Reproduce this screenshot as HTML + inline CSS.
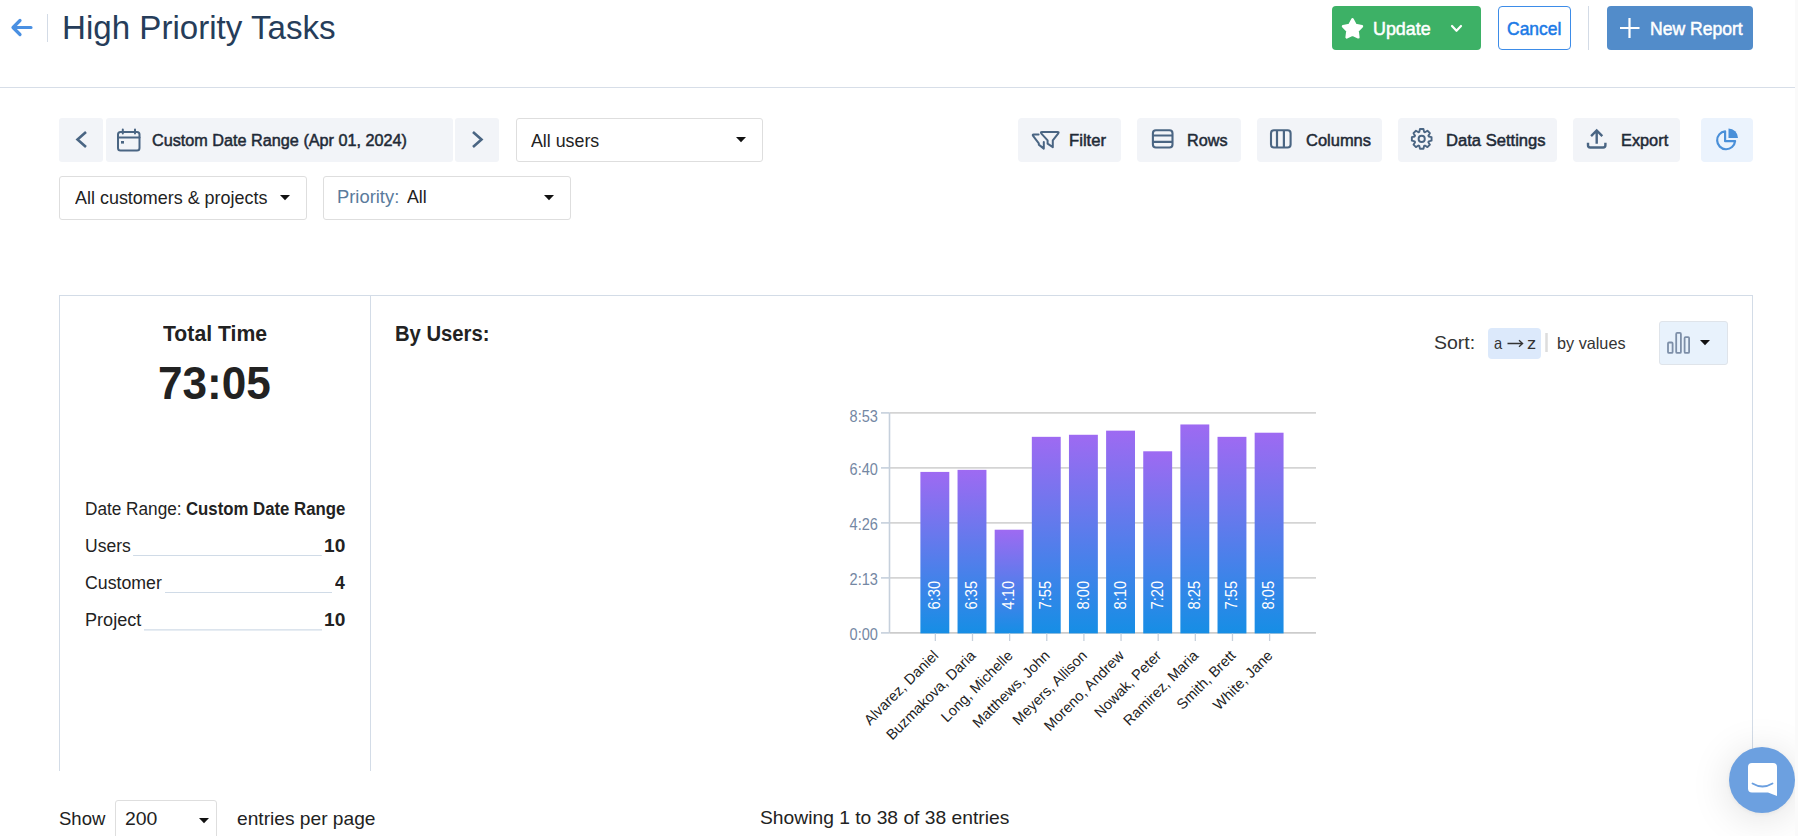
<!DOCTYPE html>
<html><head><meta charset="utf-8"><style>
html,body{margin:0;padding:0;background:#fff;}
#root{position:relative;width:1798px;height:836px;overflow:hidden;background:#fff;font-family:"Liberation Sans", sans-serif;}
.t{position:absolute;white-space:pre;line-height:1;transform-origin:0 0;font-family:"Liberation Sans", sans-serif;}
.b{position:absolute;box-sizing:border-box;}
svg{position:absolute;left:0;top:0;}
svg text{font-family:"Liberation Sans", sans-serif;}
</style></head><body><div id="root">
<div class="b" style="left:0;top:87px;width:1795px;height:1px;background:#d7dee8"></div>
<div class="b" style="left:1332px;top:6px;width:149px;height:44px;background:#3db166;border-radius:4px"></div>
<div class="b" style="left:1498px;top:6px;width:73px;height:44px;border:1.2px solid #3d8ce8;border-radius:4px"></div>
<div class="b" style="left:1607px;top:6px;width:146px;height:44px;background:#528cca;border-radius:4px"></div>
<div class="b" style="left:59px;top:118px;width:44px;height:44px;background:#f2f4f8;border-radius:3px"></div>
<div class="b" style="left:106px;top:118px;width:347px;height:44px;background:#f2f4f8;border-radius:3px"></div>
<div class="b" style="left:455px;top:118px;width:44px;height:44px;background:#f2f4f8;border-radius:3px"></div>
<div class="b" style="left:516px;top:118px;width:247px;height:44px;border:1px solid #dedede;border-radius:3px"></div>
<div class="b" style="left:1018px;top:118px;width:103px;height:44px;background:#f2f4f8;border-radius:4px"></div>
<div class="b" style="left:1137px;top:118px;width:104px;height:44px;background:#f2f4f8;border-radius:4px"></div>
<div class="b" style="left:1257px;top:118px;width:125px;height:44px;background:#f2f4f8;border-radius:4px"></div>
<div class="b" style="left:1398px;top:118px;width:159px;height:44px;background:#f2f4f8;border-radius:4px"></div>
<div class="b" style="left:1573px;top:118px;width:107px;height:44px;background:#f2f4f8;border-radius:4px"></div>
<div class="b" style="left:1701px;top:118px;width:52px;height:44px;background:#ebf3fd;border-radius:4px"></div>
<div class="b" style="left:59px;top:176px;width:248px;height:44px;border:1px solid #dedede;border-radius:3px"></div>
<div class="b" style="left:323px;top:176px;width:248px;height:44px;border:1px solid #dedede;border-radius:3px"></div>
<div class="b" style="left:59px;top:295px;width:1694px;height:476px;border:1px solid #d3dce7;border-bottom:none"></div>
<div class="b" style="left:370px;top:296px;width:1px;height:475px;background:#d3dce7"></div>
<div class="b" style="left:1488px;top:328px;width:53px;height:31px;background:#dce9fb;border-radius:4px"></div>
<div class="b" style="left:1659px;top:321px;width:69px;height:44px;background:#e8f2fc;border:1px solid #dfe4ea;border-radius:3px"></div>
<div class="b" style="left:115px;top:800px;width:102px;height:50px;border:1px solid #dedede;border-radius:3px"></div>
<div class="t" style="left:62.01px;top:11px;font-size:33.50px;color:#263d5a;transform:scaleX(0.9886)">High Priority Tasks</div>
<div class="t" style="left:1373.23px;top:20px;font-size:18.30px;-webkit-text-stroke:0.5px #ffffff;color:#ffffff;transform:scaleX(0.9786)">Update</div>
<div class="t" style="left:1507.43px;top:20px;font-size:18.60px;-webkit-text-stroke:0.5px #1b7ae6;color:#1b7ae6;transform:scaleX(0.9409)">Cancel</div>
<div class="t" style="left:1650.18px;top:20px;font-size:18.30px;-webkit-text-stroke:0.5px #ffffff;color:#ffffff;transform:scaleX(0.9606)">New Report</div>
<div class="t" style="left:151.79px;top:132px;font-size:16.30px;-webkit-text-stroke:0.5px #1f2a37;color:#1f2a37;transform:scaleX(0.9957)">Custom Date Range (Apr 01, 2024)</div>
<div class="t" style="left:530.90px;top:132px;font-size:18.40px;color:#222;transform:scaleX(0.9674)">All users</div>
<div class="t" style="left:1069.25px;top:132px;font-size:16.30px;-webkit-text-stroke:0.5px #1f2a37;color:#1f2a37;transform:scaleX(1.0239)">Filter</div>
<div class="t" style="left:1187.18px;top:132px;font-size:16.30px;-webkit-text-stroke:0.5px #1f2a37;color:#1f2a37;transform:scaleX(0.9955)">Rows</div>
<div class="t" style="left:1305.58px;top:132px;font-size:16.30px;-webkit-text-stroke:0.5px #1f2a37;color:#1f2a37;transform:scaleX(1.0120)">Columns</div>
<div class="t" style="left:1446.15px;top:132px;font-size:16.30px;-webkit-text-stroke:0.5px #1f2a37;color:#1f2a37;transform:scaleX(1.0190)">Data Settings</div>
<div class="t" style="left:1621.17px;top:132px;font-size:16.30px;-webkit-text-stroke:0.5px #1f2a37;color:#1f2a37;transform:scaleX(1.0024)">Export</div>
<div class="t" style="left:74.90px;top:190px;font-size:17.80px;color:#222;transform:scaleX(1.0091)">All customers &amp; projects</div>
<div class="t" style="left:337.36px;top:189px;font-size:17.80px;color:#5a7b9c;transform:scaleX(1.0326)">Priority:</div>
<div class="t" style="left:407.40px;top:189px;font-size:17.80px;color:#222;transform:scaleX(0.9996)">All</div>
<div class="t" style="left:163.30px;top:323px;font-size:22.50px;font-weight:bold;color:#222;transform:scaleX(0.9420)">Total Time</div>
<div class="t" style="left:158.32px;top:361px;font-size:45.50px;font-weight:bold;color:#222;transform:scaleX(0.9700)">73:05</div>
<div class="t" style="left:84.86px;top:501px;font-size:17.50px;color:#222;transform:scaleX(0.9831)">Date Range:</div>
<div class="t" style="left:185.98px;top:501px;font-size:17.50px;font-weight:bold;color:#222;transform:scaleX(0.9583)">Custom Date Range</div>
<div class="t" style="left:85.01px;top:538px;font-size:17.50px;color:#222;transform:scaleX(1.0010)">Users</div>
<div class="t" style="left:324.40px;top:538px;font-size:17.50px;font-weight:bold;color:#222;transform:scaleX(1.0927)">10</div>
<div class="t" style="left:85.27px;top:575px;font-size:17.50px;color:#222;transform:scaleX(1.0127)">Customer</div>
<div class="t" style="left:335.00px;top:575px;font-size:17.50px;font-weight:bold;color:#222;transform:scaleX(1.0057)">4</div>
<div class="t" style="left:84.69px;top:612px;font-size:17.50px;color:#222;transform:scaleX(1.0328)">Project</div>
<div class="t" style="left:324.40px;top:612px;font-size:17.50px;font-weight:bold;color:#222;transform:scaleX(1.0927)">10</div>
<div class="t" style="left:395.14px;top:323px;font-size:22.00px;font-weight:bold;color:#222;transform:scaleX(0.9195)">By Users:</div>
<div class="t" style="left:1433.99px;top:334px;font-size:18.50px;color:#333;transform:scaleX(1.0538)">Sort:</div>
<div class="t" style="left:1494.24px;top:335px;font-size:16.50px;color:#333;transform:scaleX(0.8898)">a</div>
<div class="t" style="left:1526.73px;top:335px;font-size:16.50px;color:#333;transform:scaleX(1.1062)">z</div>
<div class="t" style="left:1557.39px;top:335px;font-size:16.50px;color:#333;transform:scaleX(0.9830)">by values</div>
<div class="t" style="left:59.22px;top:809px;font-size:19.00px;color:#222;transform:scaleX(0.9753)">Show</div>
<div class="t" style="left:125.09px;top:809px;font-size:19.00px;color:#222;transform:scaleX(1.0219)">200</div>
<div class="t" style="left:237.00px;top:809px;font-size:19.00px;color:#222;transform:scaleX(1.0085)">entries per page</div>
<div class="t" style="left:759.60px;top:809px;font-size:18.50px;color:#222;transform:scaleX(1.0404)">Showing 1 to 38 of 38 entries</div>

<svg width="1798" height="836" viewBox="0 0 1798 836">
<line x1="881" y1="632.90" x2="889.5" y2="632.90" stroke="#c6d0dc" stroke-width="1.6"/>
<text transform="translate(877.9,640.00) scale(0.91,1)" text-anchor="end" font-size="16" fill="#7487a3">0:00</text>
<line x1="889.5" y1="577.90" x2="1316" y2="577.90" stroke="#d4d4d4" stroke-width="1.6"/>
<line x1="881" y1="577.90" x2="889.5" y2="577.90" stroke="#c6d0dc" stroke-width="1.6"/>
<text transform="translate(877.9,585.00) scale(0.91,1)" text-anchor="end" font-size="16" fill="#7487a3">2:13</text>
<line x1="889.5" y1="522.90" x2="1316" y2="522.90" stroke="#d4d4d4" stroke-width="1.6"/>
<line x1="881" y1="522.90" x2="889.5" y2="522.90" stroke="#c6d0dc" stroke-width="1.6"/>
<text transform="translate(877.9,530.00) scale(0.91,1)" text-anchor="end" font-size="16" fill="#7487a3">4:26</text>
<line x1="889.5" y1="467.90" x2="1316" y2="467.90" stroke="#d4d4d4" stroke-width="1.6"/>
<line x1="881" y1="467.90" x2="889.5" y2="467.90" stroke="#c6d0dc" stroke-width="1.6"/>
<text transform="translate(877.9,475.00) scale(0.91,1)" text-anchor="end" font-size="16" fill="#7487a3">6:40</text>
<line x1="889.5" y1="412.90" x2="1316" y2="412.90" stroke="#d4d4d4" stroke-width="1.6"/>
<line x1="881" y1="412.90" x2="889.5" y2="412.90" stroke="#c6d0dc" stroke-width="1.6"/>
<text transform="translate(877.9,422.00) scale(0.91,1)" text-anchor="end" font-size="16" fill="#7487a3">8:53</text>
<line x1="889.5" y1="412.9" x2="889.5" y2="632.9" stroke="#c6d0dc" stroke-width="1.6"/>
<line x1="889.5" y1="632.90" x2="1316" y2="632.90" stroke="#cccccc" stroke-width="1.6"/>
<defs><linearGradient id="bg" x1="0" y1="0" x2="0" y2="1"><stop offset="0" stop-color="#9e6af2"/><stop offset="1" stop-color="#168ee5"/></linearGradient></defs>
<rect x="920.40" y="471.92" width="28.90" height="161.48" fill="url(#bg)"/>
<line x1="935.35" y1="633.5" x2="935.35" y2="641" stroke="#c6d0dc" stroke-width="1.3"/>
<text transform="translate(940.05,609.4) rotate(-90) scale(0.915,1)" font-size="16" fill="#fff">6:30</text>
<text transform="translate(939.35,656.5) rotate(-45)" text-anchor="end" font-size="14.6" fill="#222">Alvarez, Daniel</text>
<rect x="957.54" y="469.86" width="28.90" height="163.54" fill="url(#bg)"/>
<line x1="972.49" y1="633.5" x2="972.49" y2="641" stroke="#c6d0dc" stroke-width="1.3"/>
<text transform="translate(977.19,609.4) rotate(-90) scale(0.915,1)" font-size="16" fill="#fff">6:35</text>
<text transform="translate(976.49,656.5) rotate(-45)" text-anchor="end" font-size="14.6" fill="#222">Buzmakova, Daria</text>
<rect x="994.68" y="529.71" width="28.90" height="103.69" fill="url(#bg)"/>
<line x1="1009.63" y1="633.5" x2="1009.63" y2="641" stroke="#c6d0dc" stroke-width="1.3"/>
<text transform="translate(1014.33,609.4) rotate(-90) scale(0.915,1)" font-size="16" fill="#fff">4:10</text>
<text transform="translate(1013.63,656.5) rotate(-45)" text-anchor="end" font-size="14.6" fill="#222">Long, Michelle</text>
<rect x="1031.82" y="436.84" width="28.90" height="196.56" fill="url(#bg)"/>
<line x1="1046.77" y1="633.5" x2="1046.77" y2="641" stroke="#c6d0dc" stroke-width="1.3"/>
<text transform="translate(1051.47,609.4) rotate(-90) scale(0.915,1)" font-size="16" fill="#fff">7:55</text>
<text transform="translate(1050.77,656.5) rotate(-45)" text-anchor="end" font-size="14.6" fill="#222">Matthews, John</text>
<rect x="1068.96" y="434.78" width="28.90" height="198.62" fill="url(#bg)"/>
<line x1="1083.91" y1="633.5" x2="1083.91" y2="641" stroke="#c6d0dc" stroke-width="1.3"/>
<text transform="translate(1088.61,609.4) rotate(-90) scale(0.915,1)" font-size="16" fill="#fff">8:00</text>
<text transform="translate(1087.91,656.5) rotate(-45)" text-anchor="end" font-size="14.6" fill="#222">Meyers, Allison</text>
<rect x="1106.10" y="430.65" width="28.90" height="202.75" fill="url(#bg)"/>
<line x1="1121.05" y1="633.5" x2="1121.05" y2="641" stroke="#c6d0dc" stroke-width="1.3"/>
<text transform="translate(1125.75,609.4) rotate(-90) scale(0.915,1)" font-size="16" fill="#fff">8:10</text>
<text transform="translate(1125.05,656.5) rotate(-45)" text-anchor="end" font-size="14.6" fill="#222">Moreno, Andrew</text>
<rect x="1143.24" y="451.29" width="28.90" height="182.11" fill="url(#bg)"/>
<line x1="1158.19" y1="633.5" x2="1158.19" y2="641" stroke="#c6d0dc" stroke-width="1.3"/>
<text transform="translate(1162.89,609.4) rotate(-90) scale(0.915,1)" font-size="16" fill="#fff">7:20</text>
<text transform="translate(1162.19,656.5) rotate(-45)" text-anchor="end" font-size="14.6" fill="#222">Nowak, Peter</text>
<rect x="1180.38" y="424.46" width="28.90" height="208.94" fill="url(#bg)"/>
<line x1="1195.33" y1="633.5" x2="1195.33" y2="641" stroke="#c6d0dc" stroke-width="1.3"/>
<text transform="translate(1200.03,609.4) rotate(-90) scale(0.915,1)" font-size="16" fill="#fff">8:25</text>
<text transform="translate(1199.33,656.5) rotate(-45)" text-anchor="end" font-size="14.6" fill="#222">Ramirez, Maria</text>
<rect x="1217.52" y="436.84" width="28.90" height="196.56" fill="url(#bg)"/>
<line x1="1232.47" y1="633.5" x2="1232.47" y2="641" stroke="#c6d0dc" stroke-width="1.3"/>
<text transform="translate(1237.17,609.4) rotate(-90) scale(0.915,1)" font-size="16" fill="#fff">7:55</text>
<text transform="translate(1236.47,656.5) rotate(-45)" text-anchor="end" font-size="14.6" fill="#222">Smith, Brett</text>
<rect x="1254.66" y="432.71" width="28.90" height="200.69" fill="url(#bg)"/>
<line x1="1269.61" y1="633.5" x2="1269.61" y2="641" stroke="#c6d0dc" stroke-width="1.3"/>
<text transform="translate(1274.31,609.4) rotate(-90) scale(0.915,1)" font-size="16" fill="#fff">8:05</text>
<text transform="translate(1273.61,656.5) rotate(-45)" text-anchor="end" font-size="14.6" fill="#222">White, Jane</text>
<path d="M31 27.5H13.5M20 20.5L13 27.5L20 34.5" fill="none" stroke="#4a90e2" stroke-width="3.2" stroke-linecap="round" stroke-linejoin="round"/>
<line x1="47.5" y1="14" x2="47.5" y2="42" stroke="#d3dbe6" stroke-width="1"/>
<line x1="1588.5" y1="6" x2="1588.5" y2="50" stroke="#d3dbe6" stroke-width="1"/>
<path d="M1352.50 19.40 L1355.62 25.01 L1361.92 26.24 L1357.54 30.94 L1358.32 37.31 L1352.50 34.60 L1346.68 37.31 L1347.46 30.94 L1343.08 26.24 L1349.38 25.01Z" fill="#fff" stroke="#fff" stroke-width="2.6" stroke-linejoin="round"/>
<path d="M1452 26L1456.5 30.8L1461 26" fill="none" stroke="#fff" stroke-width="2.2" stroke-linecap="round" stroke-linejoin="round"/>
<path d="M1629.5 18V38M1620 28H1639.5" fill="none" stroke="#fff" stroke-width="2.2"/>
<path d="M86 132L77.5 139.5L86 147" fill="none" stroke="#4a6583" stroke-width="2.6"/>
<path d="M473 132L481.5 139.5L473 147" fill="none" stroke="#4a6583" stroke-width="2.6"/>
<rect x="118" y="132" width="21.5" height="18.5" rx="2.5" fill="none" stroke="#4a6583" stroke-width="2"/>
<path d="M118 137.5H139.5M122.8 129.5V133.5M135 129.5V133.5" fill="none" stroke="#4a6583" stroke-width="2" stroke-linecap="round"/>
<rect x="121" y="141" width="3" height="2.6" fill="#4a6583"/>
<path d="M736.0 137.0H746.0L741.0 142.2Z" fill="#111"/>
<path d="M280.0 195.0H290.0L285.0 200.2Z" fill="#111"/>
<path d="M544.0 195.0H554.0L549.0 200.2Z" fill="#111"/>
<path d="M199.0 818.0H209.0L204.0 823.2Z" fill="#111"/>
<path d="M1700.0 340.0H1710.0L1705.0 345.2Z" fill="#111"/>
<path d="M1038.6 134.6H1033.6Q1032.2 134.6 1033.1 135.9L1038.8 143.3V144.6L1043.8 148.6V142" fill="none" stroke="#4a6583" stroke-width="2" stroke-linejoin="round" stroke-linecap="round"/>
<path d="M1041.9 132H1057.6Q1059.2 132 1058.3 133.3L1052.8 140.3V147.2L1047.6 143.7V140.3L1041.2 133.3Q1040.4 132 1041.9 132Z" fill="none" stroke="#4a6583" stroke-width="2" stroke-linejoin="round"/>
<rect x="1152.9" y="130.3" width="19.6" height="17.2" rx="3" fill="none" stroke="#4a6583" stroke-width="2.1"/>
<path d="M1153 135.5H1172.5M1153 141.9H1172.5" fill="none" stroke="#4a6583" stroke-width="2.2"/>
<rect x="1271" y="130.3" width="19.6" height="17.2" rx="3" fill="none" stroke="#4a6583" stroke-width="2.1"/>
<path d="M1277 130.5V147.3M1283.9 130.5V147.3" fill="none" stroke="#4a6583" stroke-width="2.2"/>
<path d="M1419.29 131.90 L1419.96 129.05 L1423.44 129.05 L1424.11 131.90 L1424.94 132.25 L1427.44 130.71 L1429.89 133.16 L1428.35 135.66 L1428.70 136.49 L1431.55 137.16 L1431.55 140.64 L1428.70 141.31 L1428.35 142.14 L1429.89 144.64 L1427.44 147.09 L1424.94 145.55 L1424.11 145.90 L1423.44 148.75 L1419.96 148.75 L1419.29 145.90 L1418.46 145.55 L1415.96 147.09 L1413.51 144.64 L1415.05 142.14 L1414.70 141.31 L1411.85 140.64 L1411.85 137.16 L1414.70 136.49 L1415.05 135.66 L1413.51 133.16 L1415.96 130.71 L1418.46 132.25Z" fill="none" stroke="#4a6583" stroke-width="1.9" stroke-linejoin="round"/>
<circle cx="1421.7" cy="138.9" r="3.1" fill="none" stroke="#4a6583" stroke-width="1.9"/>
<path d="M1588 142.8V145.3Q1588 147.5 1590.2 147.5H1603.2Q1605.4 147.5 1605.4 145.3V142.8" fill="none" stroke="#4a6583" stroke-width="2.4"/>
<path d="M1596.7 143.8V130.8M1591.1 136.1L1596.7 130.5L1602.3 136.1" fill="none" stroke="#4a6583" stroke-width="2.4"/>
<path d="M1725.1 131.3A9 9 0 1 0 1735.1 141.2H1725.1Z" fill="none" stroke="#4a90d9" stroke-width="2.2" stroke-linejoin="round"/>
<path d="M1728.5 128.5A9.5 9.5 0 0 1 1738 138H1728.5Z" fill="#4a90d9"/>
<rect x="1668" y="342.5" width="4.6" height="10.4" rx="1" fill="none" stroke="#7d8fa8" stroke-width="1.8"/><rect x="1676.2" y="332.9" width="4.7" height="20" rx="1" fill="none" stroke="#7d8fa8" stroke-width="1.8"/><rect x="1684.6" y="337.1" width="4.5" height="15.8" rx="1" fill="none" stroke="#7d8fa8" stroke-width="1.8"/>
<path d="M1507.5 343.5H1522.5M1519 340.3L1522.6 343.5L1519 346.7" fill="none" stroke="#333" stroke-width="1.3"/>
<line x1="1546.5" y1="333" x2="1546.5" y2="352" stroke="#dddddd" stroke-width="2.5"/>
<line x1="133.1" y1="555.5" x2="321.8" y2="555.5" stroke="#d0dbe7" stroke-width="1.2"/>
<line x1="165.0" y1="592.5" x2="332.0" y2="592.5" stroke="#d0dbe7" stroke-width="1.2"/>
<line x1="144.0" y1="629.8" x2="322.0" y2="629.8" stroke="#d0dbe7" stroke-width="1.2"/>
</svg>
<div class="b" style="left:1729px;top:747px;width:66px;height:66px;border-radius:50%;background:#6ca0e0;box-shadow:0 5px 40px rgba(0,0,0,0.13), 0 1px 4px rgba(0,0,0,0.05)"></div>
<svg width="1798" height="836" viewBox="0 0 1798 836" style="pointer-events:none">
<path d="M1752 763H1773A4 4 0 0 1 1777 767V796L1768 792.5H1752A4 4 0 0 1 1748 788.5V767A4 4 0 0 1 1752 763Z" fill="#fff"/>
<path d="M1752.5 783.5Q1762.5 789.5 1772.5 783.5" fill="none" stroke="#6ca0e0" stroke-width="1.8" stroke-linecap="round"/>
</svg>
<div class="b" style="left:1795px;top:0;width:3px;height:836px;background:#fafafa"></div>
</div></body></html>
